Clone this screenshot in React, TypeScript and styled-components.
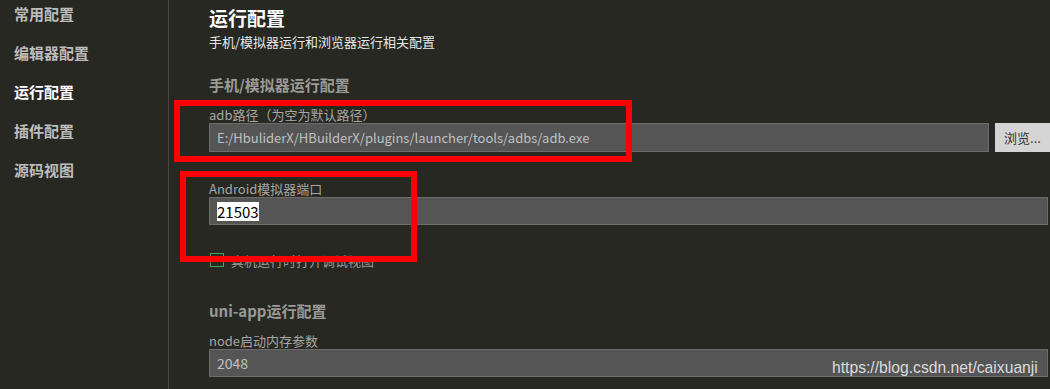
import React from "react";
import styled, { createGlobalStyle } from "styled-components";

const Global = createGlobalStyle`
  html, body { margin: 0; padding: 0; background: #272822; overflow: hidden; }
  body { font-family: "Noto Sans CJK SC", "Noto Sans", sans-serif; }
  * { box-sizing: border-box; }
`;

const Page = styled.div`
  position: relative;
  display: flex;
  width: 1050px;
  height: 389px;
  background: #272822;
  overflow: hidden;
`;

const Sidebar = styled.nav`
  width: 169px;
  flex: none;
  border-right: 1px solid #47473f;
  display: flex;
  flex-direction: column;
  gap: 19px;
  padding: 4px 0 0 14px;
`;

const NavItem = styled.div<{ $active?: boolean }>`
  font-size: 15px;
  line-height: 20px;
  font-weight: 700;
  color: ${(p) => (p.$active ? "#ffffff" : "#bdbdbd")};
`;

const Main = styled.main`
  flex: 1;
  padding: 6px 2px 0 40px;
  display: flex;
  flex-direction: column;
`;

const Title = styled.h1`
  margin: 0;
  font-size: 19px;
  line-height: 24px;
  font-weight: 700;
  color: #ffffff;
`;

const Subtitle = styled.div`
  margin-top: 2px;
  font-size: 13px;
  line-height: 20px;
  color: #e6e6e6;
`;

const SectionTitle = styled.h2<{ $top: number }>`
  margin: ${(p) => p.$top}px 0 0;
  font-size: 15px;
  line-height: 20px;
  font-weight: 700;
  color: #9a9a96;
`;

const Field = styled.div<{ $top: number }>`
  margin-top: ${(p) => p.$top}px;
  display: flex;
  flex-direction: column;
`;

const Label = styled.label`
  font-size: 13px;
  line-height: 17px;
  color: #a6a6a2;
`;

const Row = styled.div`
  display: flex;
  gap: 6px;
  margin-right: -2px;
`;

const Input = styled.div<{ $h: number; $size?: number }>`
  flex: 1 1 auto;
  min-width: 0;
  height: ${(p) => p.$h}px;
  background: #555555;
  border: 1px solid #6c6c6a;
  display: flex;
  align-items: center;
  padding-left: 7px;
  font-size: ${(p) => p.$size ?? 13}px;
  color: #c0c0c0;
  white-space: nowrap;
  overflow: hidden;
`;

const Selected = styled.span`
  background: #ffffff;
  color: #000000;
  font-size: 15px;
  line-height: 19px;
`;

const Button = styled.div`
  width: 55px;
  flex: none;
  height: 29px;
  background: #d4d4d4;
  color: #333333;
  font-size: 13px;
  display: flex;
  align-items: center;
  justify-content: center;
`;

const CheckRow = styled.div`
  margin-top: 28px;
  display: flex;
  align-items: center;
  gap: 7px;
  height: 14px;
  padding-left: 1px;
`;

const Box = styled.span`
  width: 14px;
  height: 14px;
  border: 1px solid #3ea55a;
`;

const CheckText = styled.span`
  font-size: 13px;
  color: #9a9a96;
`;

const Mark = styled.div<{ $l: number; $t: number; $w: number; $h: number }>`
  position: absolute;
  left: ${(p) => p.$l}px;
  top: ${(p) => p.$t}px;
  width: ${(p) => p.$w}px;
  height: ${(p) => p.$h}px;
  border: 6px solid #ff0000;
  pointer-events: none;
`;

const Watermark = styled.div`
  position: absolute;
  left: 832px;
  top: 358px;
  font-family: "Liberation Sans", Arial, sans-serif;
  font-size: 15.7px;
  line-height: 20px;
  color: #dcdcdc;
`;

export default function App() {
  return (
    <>
      <Global />
      <Page>
        <Sidebar>
          <NavItem>常用配置</NavItem>
          <NavItem>编辑器配置</NavItem>
          <NavItem $active>运行配置</NavItem>
          <NavItem>插件配置</NavItem>
          <NavItem>源码视图</NavItem>
        </Sidebar>
        <Main>
          <Title>运行配置</Title>
          <Subtitle>手机/模拟器运行和浏览器运行相关配置</Subtitle>
          <SectionTitle $top={23}>手机/模拟器运行配置</SectionTitle>
          <Field $top={11}>
            <Label>adb路径（为空为默认路径）</Label>
            <Row>
              <Input $h={29}>E:/HbuliderX/HBuilderX/plugins/launcher/tools/adbs/adb.exe</Input>
              <Button>浏览...</Button>
            </Row>
          </Field>
          <Field $top={28}>
            <Label>Android模拟器端口</Label>
            <Input $h={28}>
              <Selected>21503</Selected>
            </Input>
          </Field>
          <CheckRow>
            <Box />
            <CheckText>真机运行时打开调试视图</CheckText>
          </CheckRow>
          <SectionTitle $top={34}>uni-app运行配置</SectionTitle>
          <Field $top={11}>
            <Label>node启动内存参数</Label>
            <Input $h={28} $size={14}>2048</Input>
          </Field>
        </Main>
        <Mark $l={174} $t={100} $w={458} $h={62} />
        <Mark $l={180} $t={171} $w={237} $h={91} />
        <Watermark>https://blog.csdn.net/caixuanji</Watermark>
      </Page>
    </>
  );
}
